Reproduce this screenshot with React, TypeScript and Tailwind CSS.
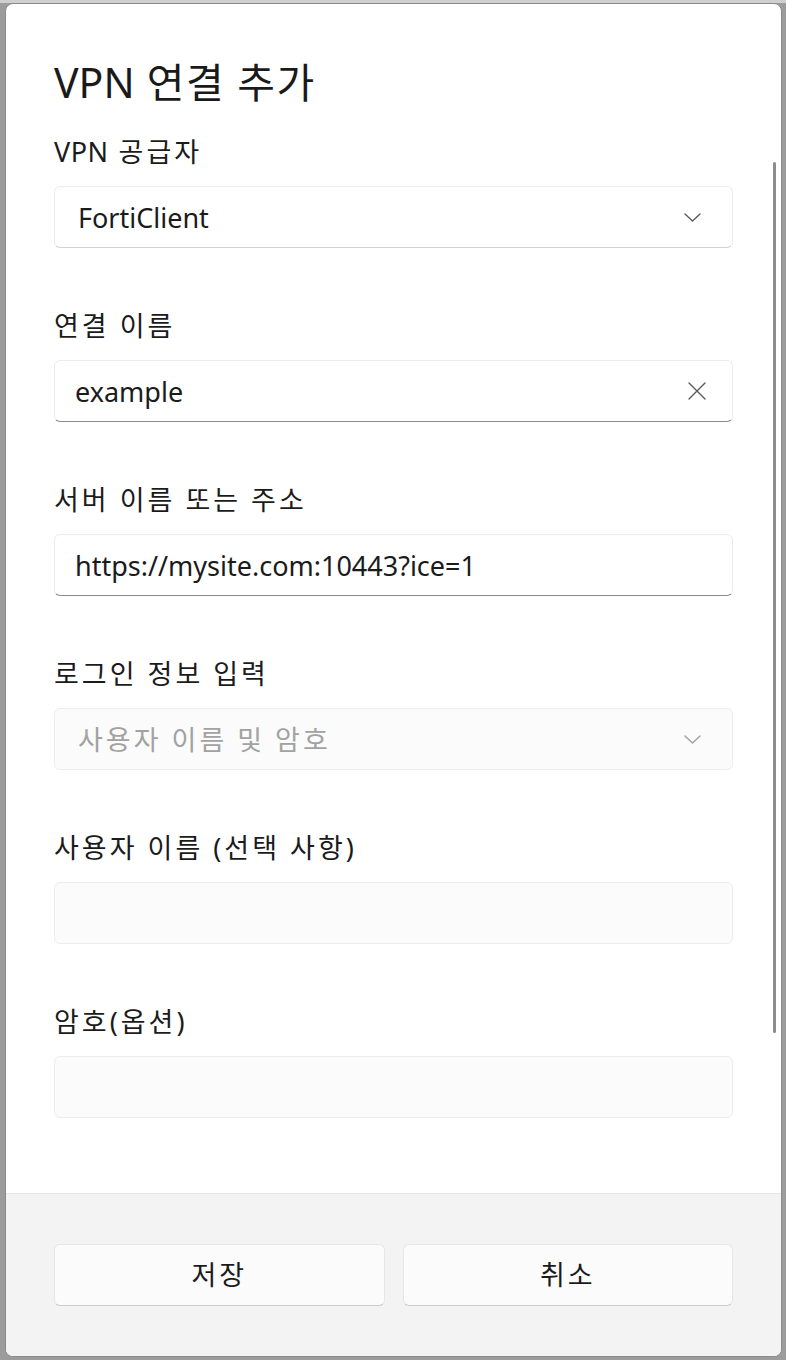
import React from "react";

const FONT = {
    fontFamily: '"Noto Sans", "Noto Sans CJK KR", sans-serif',
};

function Chevron({ color = "#5c5c5c" }: { color?: string }) {
    return (
        <svg width="17" height="9" viewBox="0 0 17 9" fill="none">
            <path d="M1 1 L8.5 8 L16 1" stroke={color} strokeWidth="1.4" strokeLinecap="round" strokeLinejoin="round" />
        </svg>
    );
}

function ClearIcon() {
    return (
        <svg width="18" height="18" viewBox="0 0 18 18" fill="none">
            <path d="M1 1 L17 17 M17 1 L1 17" stroke="#5a5a5a" strokeWidth="1.4" strokeLinecap="round" />
        </svg>
    );
}

function Field({ label, children }: { label: React.ReactNode; children: React.ReactNode }) {
    return (
        <div className="flex flex-col">
            <div className="h-[28px] mb-[21px] flex items-center text-[27px] tracking-[3px] text-[#1b1b1b] leading-none whitespace-nowrap">
                {label}
            </div>
            {children}
        </div>
    );
}

export default function App() {
    return (
        <div className="w-[786px] h-[1360px] bg-[#9c9c9c] flex flex-col overflow-hidden" style={FONT}>
            <div className="h-[3px] bg-[#cfcfcf] shrink-0" />
            <div className="flex-1 pt-[1px] pl-[6px] pr-[4px] pb-[3px] flex">
                {/* Dialog */}
                <div className="relative flex-1 flex flex-col bg-white rounded-[8px] overflow-hidden border border-[#8a8a8a] -ml-px -mt-px">
                    {/* Content */}
                    <div className="flex-1 px-[48px] pt-[50px]">
                        <h1 className="h-[56px] flex items-center text-[41px] tracking-[1.5px] text-[#1a1a1a] font-normal leading-none whitespace-nowrap">
                            <span className="tracking-normal">VPN</span>&nbsp;연결 추가
                        </h1>

                        <div className="mt-[27px] flex flex-col gap-[63px]">
                            <Field label={<><span className="tracking-[0.5px]">VPN</span>&nbsp;공급자</>}>
                                <div className="h-[62px] rounded-[6px] bg-white border border-[#ececec] border-b-[#d2d2d2] flex items-center justify-between pl-[23px] pr-[31px]">
                                    <span className="text-[27px] leading-none text-[#1b1b1b]">FortiClient</span>
                                    <Chevron />
                                </div>
                            </Field>

                            <Field label="연결 이름">
                                <div className="h-[62px] rounded-[6px] bg-white border border-[#ececec] border-b-[#8a8a8a] flex items-center justify-between pl-[20px] pr-[26px]">
                                    <span className="text-[27px] leading-none text-[#1b1b1b]">example</span>
                                    <ClearIcon />
                                </div>
                            </Field>

                            <Field label="서버 이름 또는 주소">
                                <div className="h-[62px] rounded-[6px] bg-white border border-[#ececec] border-b-[#8a8a8a] flex items-center pl-[20px]">
                                    <span className="text-[27px] leading-none text-[#1b1b1b]">https://mysite.com:10443?ice=1</span>
                                </div>
                            </Field>

                            <Field label="로그인 정보 입력">
                                <div className="h-[62px] rounded-[6px] bg-[#fbfbfb] border border-[#ededed] flex items-center justify-between pl-[23px] pr-[31px]">
                                    <span className="text-[27px] tracking-[3px] leading-none text-[#a2a2a2]">사용자 이름 및 암호</span>
                                    <Chevron color="#a0a0a0" />
                                </div>
                            </Field>

                            <Field label="사용자 이름 (선택 사항)">
                                <div className="h-[62px] rounded-[6px] bg-[#fbfbfb] border border-[#ededed]" />
                            </Field>

                            <Field label="암호(옵션)">
                                <div className="h-[62px] rounded-[6px] bg-[#fbfbfb] border border-[#ededed]" />
                            </Field>
                        </div>
                    </div>

                    {/* Footer */}
                    <div className="h-[163px] shrink-0 bg-[#f3f3f3] border-t border-[#e5e5e5] px-[48px] pt-[50px] flex gap-[18px]">
                        <button className="flex-1 h-[62px] rounded-[6px] bg-[#fbfbfb] border border-[#e6e6e6] border-b-[#cccccc] text-[27px] tracking-[3px] text-[#1b1b1b]">
                            저장
                        </button>
                        <button className="flex-1 h-[62px] rounded-[6px] bg-[#fbfbfb] border border-[#e6e6e6] border-b-[#cccccc] text-[27px] tracking-[3px] text-[#1b1b1b]">
                            취소
                        </button>
                    </div>

                    {/* Scrollbar */}
                    <div className="absolute right-[5px] top-[158px] w-[3px] h-[871px] rounded-full bg-[#8c8c8c]" />
                </div>
            </div>
        </div>
    );
}
